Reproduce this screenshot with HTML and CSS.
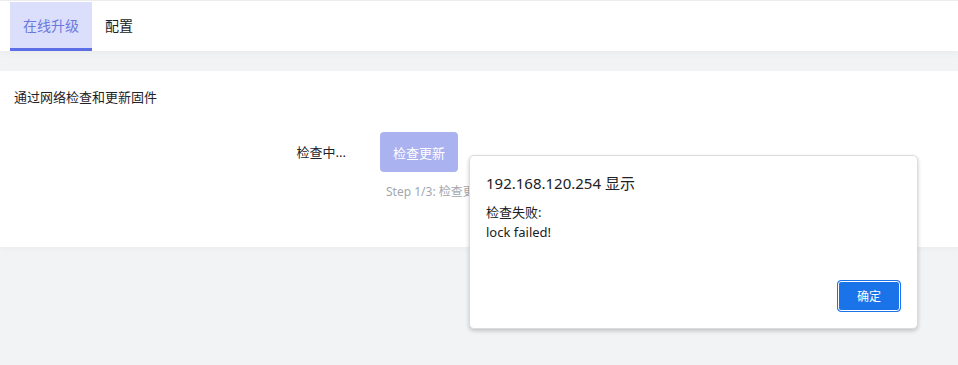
FILE: index.html
```html
<!DOCTYPE html>
<html lang="zh-CN">
<head>
    <meta charset="UTF-8">
    <meta name="viewport" content="width=device-width, initial-scale=1.0">
    <title>在线升级</title>
    <link rel="stylesheet" href="styles.css">
</head>
<body>
    <div class="tabs">
        <div class="tab active">在线升级</div>
        <div class="tab">配置</div>
    </div>

    <div class="card">
        <p class="desc">通过网络检查和更新固件</p>
        <div class="check-row">
            <span class="status">检查中...</span>
            <div class="action">
                <button class="btn-check" disabled>检查更新</button>
                <div class="step">Step 1/3: 检查更新中...</div>
            </div>
        </div>
    </div>

    <div class="alert">
        <div class="alert-title">192.168.120.254 显示</div>
        <div class="alert-msg">检查失败:<br>lock failed!</div>
        <div class="alert-foot">
            <button class="btn-ok">确定</button>
        </div>
    </div>
</body>
</html>
```

FILE: styles.css
```css
:root {
    --primary: #5b6ee6;
    --tab-bg: #dcdffb;
    --background: #f2f3f5;
    --text: #1f2329;
}

* {
    margin: 0;
    padding: 0;
    box-sizing: border-box;
    font-family: "Noto Sans", "Noto Sans CJK SC", sans-serif;
}

body {
    background: var(--background);
    color: var(--text);
    height: 365px;
    overflow: hidden;
    position: relative;
}

.tabs {
    display: flex;
    background: white;
    padding: 1px 10px 0;
    border-top: 1px solid #ececef;
    height: 51px;
    box-shadow: 0 2px 8px rgba(0, 0, 0, 0.04);
}

.tab {
    padding: 0 13px;
    font-size: 14px;
    line-height: 47px;
    border-bottom: 3px solid transparent;
    color: #222;
}

.tab.active {
    background: var(--tab-bg);
    color: #6a78e0;
    border-bottom-color: var(--primary);
}

.card {
    background: white;
    margin-top: 20px;
    padding: 16px 14px 47px;
    height: 176px;
    box-shadow: 0 2px 6px rgba(0, 0, 0, 0.03);
}

.desc {
    font-size: 13px;
    line-height: 20px;
}

.check-row {
    display: flex;
    align-items: flex-start;
    margin-top: 25px;
    font-size: 13px;
}

.status {
    width: 332px;
    text-align: right;
    line-height: 40px;
    margin-right: 34px;
}

.btn-check {
    width: 78px;
    height: 40px;
    border: none;
    border-radius: 4px;
    background: #aab2ef;
    color: white;
    font-size: 13px;
}

.step {
    margin-top: 10px;
    padding-left: 6px;
    font-size: 12px;
    color: #a3a7ae;
    white-space: nowrap;
}

.alert {
    position: absolute;
    left: 469px;
    top: 155px;
    width: 449px;
    height: 174px;
    background: white;
    border-radius: 5px;
    border: 1px solid #dcdcdc;
    box-shadow: 0 2px 4px rgba(0, 0, 0, 0.2);
    padding: 16px 16px 16px 16px;
    display: flex;
    flex-direction: column;
}

.alert-title {
    font-size: 15px;
    line-height: 22px;
    color: #202124;
}

.alert-msg {
    margin-top: 8px;
    font-size: 13px;
    line-height: 20px;
    color: #202124;
}

.alert-foot {
    margin-top: auto;
    display: flex;
    justify-content: flex-end;
}

.btn-ok {
    width: 64px;
    height: 32px;
    border: 1px solid #1a73e8;
    border-radius: 4px;
    background: #1a73e8;
    box-shadow: inset 0 0 0 1px white;
    color: white;
    font-size: 12px;
}
```
